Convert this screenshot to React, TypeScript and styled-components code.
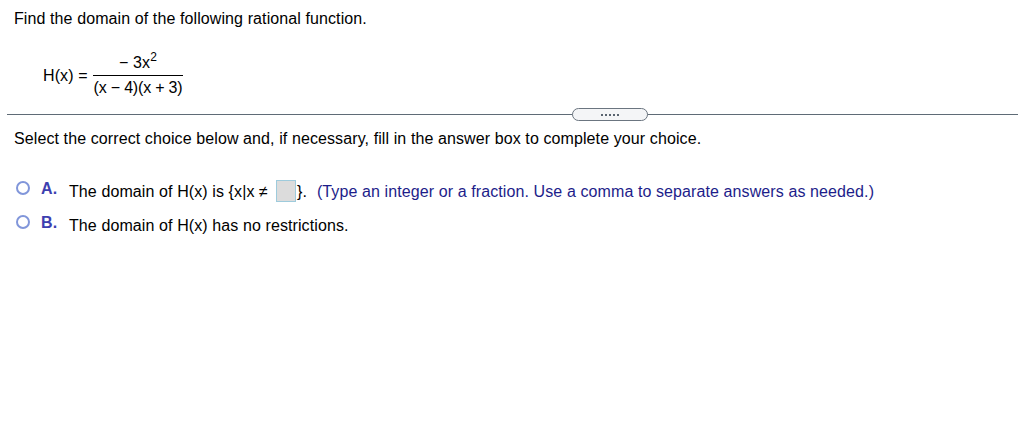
import React from "react";
import styled, { createGlobalStyle } from "styled-components";

const Global = createGlobalStyle`
  html, body { margin: 0; padding: 0; background: #fff; }
  body {
    font-family: "Liberation Sans", Arial, sans-serif;
    font-size: 16px;
    letter-spacing: 0.1px;
    color: #000;
  }
`;

const Page = styled.div`
  padding: 9px 1px 0 7px;
`;

const Section = styled.div`
  padding: 0 7px;
`;

const Prompt = styled.p`
  margin: 0;
  line-height: 20px;
`;

const Equation = styled.div`
  display: flex;
  align-items: center;
  gap: 5px;
  margin: 25px 0 0 29px;
`;

const Lhs = styled.span`
  line-height: 18px;
`;

const Fraction = styled.span`
  display: inline-flex;
  flex-direction: column;
  align-items: center;
`;

const Numer = styled.span`
  padding: 0 4px 3px;
  line-height: 18px;
`;

const Denom = styled.span`
  border-top: 1px solid #000;
  padding: 3px 1px 0;
  line-height: 18px;
  letter-spacing: -0.2px;
`;

const Sup = styled.sup`
  font-size: 12px;
  line-height: 0;
  vertical-align: 7px;
`;

const Divider = styled.div`
  position: relative;
  margin-top: 17px;
  height: 1px;
  background: #5f6b76;
`;

const Handle = styled.span`
  position: absolute;
  left: 565px;
  top: -6px;
  width: 74px;
  height: 11px;
  border: 1px solid #6b7580;
  border-radius: 7px;
  background: #f4f5f7;
  display: flex;
  align-items: center;
  justify-content: center;
  gap: 2px;
`;

const Dot = styled.span`
  width: 2px;
  height: 2px;
  background: #5a6470;
`;

const Instruction = styled.p`
  margin: 14px 0 0;
  line-height: 20px;
`;

const Choices = styled.div`
  margin-top: 33px;
  display: flex;
  flex-direction: column;
  gap: 14px;
`;

const Choice = styled.div`
  display: flex;
  align-items: flex-start;
  height: 20px;
`;

const Radio = styled.span`
  width: 10px;
  height: 10px;
  border: 2px solid #8196da;
  border-radius: 50%;
  margin: -1px 0 0 2px;
  flex: none;
`;

const Letter = styled.span`
  color: #3d3fb0;
  font-weight: bold;
  font-size: 16px;
  line-height: 14px;
  width: 28px;
  margin-left: 11px;
`;

const Body = styled.span`
  white-space: pre;
  line-height: 20px;
`;

const AnswerBox = styled.span`
  display: inline-block;
  width: 20px;
  height: 22px;
  box-sizing: border-box;
  border: 1px solid #9ecbdc;
  background: #dcdcdc;
  vertical-align: middle;
  margin: -3px 1px 0 8px;
`;

const Hint = styled.span`
  color: #1d1d8a;
  line-height: 20px;
  margin-left: 10px;
`;

export default function App() {
  return (
    <>
      <Global />
      <Page>
        <Section>
          <Prompt>Find the domain of the following rational function.</Prompt>
          <Equation>
            <Lhs>H(x) =</Lhs>
            <Fraction>
              <Numer>
                − 3x<Sup>2</Sup>
              </Numer>
              <Denom>(x − 4)(x + 3)</Denom>
            </Fraction>
          </Equation>
        </Section>
        <Divider>
          <Handle>
            <Dot />
            <Dot />
            <Dot />
            <Dot />
            <Dot />
          </Handle>
        </Divider>
        <Section>
          <Instruction>
            Select the correct choice below and, if necessary, fill in the answer box to complete your choice.
          </Instruction>
          <Choices>
            <Choice>
              <Radio />
              <Letter>A.</Letter>
              <Body>
                The domain of H(x) is {"{"}x|x ≠<AnswerBox />{"}"}.
              </Body>
              <Hint>(Type an integer or a fraction. Use a comma to separate answers as needed.)</Hint>
            </Choice>
            <Choice>
              <Radio />
              <Letter>B.</Letter>
              <Body>The domain of H(x) has no restrictions.</Body>
            </Choice>
          </Choices>
        </Section>
      </Page>
    </>
  );
}
